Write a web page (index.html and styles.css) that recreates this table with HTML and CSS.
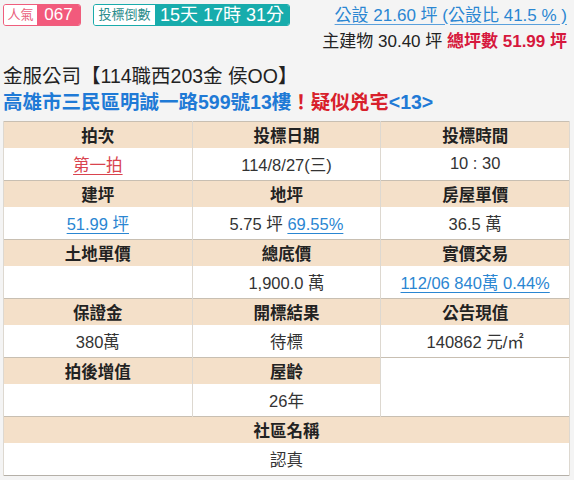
FILE: index.html
```html
<!DOCTYPE html>
<html lang="zh-Hant">
<head>
<meta charset="utf-8">
<link rel="stylesheet" href="styles.css">
</head>
<body>
<div class="top">
  <div class="badges">
    <span class="badge pink"><span class="lbl">人氣</span><span class="val">067</span></span>
    <span class="badge teal"><span class="lbl">投標倒數</span><span class="val">15天 17時 31分</span></span>
  </div>
  <div class="area">
    <a class="public" href="#">公設 21.60 坪 (公設比 41.5 % )</a>
    <div class="main">主建物 30.40 坪 <b class="total">總坪數 51.99 坪</b></div>
  </div>
</div>
<div class="title">金服公司【114職西203金 侯OO】</div>
<div class="addr">高雄市三民區明誠一路599號13樓<span class="warn">！疑似兇宅</span>&lt;13&gt;</div>
<table class="info">
  <tr class="h"><th>拍次</th><th>投標日期</th><th>投標時間</th></tr>
  <tr class="d"><td><a class="red" href="#">第一拍</a></td><td>114/8/27(三)</td><td>10 : 30</td></tr>
  <tr class="h"><th>建坪</th><th>地坪</th><th>房屋單價</th></tr>
  <tr class="d"><td><a class="blue" href="#">51.99 坪</a></td><td>5.75 坪 <a class="blue" href="#">69.55%</a></td><td>36.5 萬</td></tr>
  <tr class="h"><th>土地單價</th><th>總底價</th><th>實價交易</th></tr>
  <tr class="d"><td></td><td>1,900.0 萬</td><td><a class="blue" href="#">112/06 840萬 0.44%</a></td></tr>
  <tr class="h"><th>保證金</th><th>開標結果</th><th>公告現值</th></tr>
  <tr class="d"><td>380萬</td><td>待標</td><td>140862 元/㎡</td></tr>
  <tr class="h"><th>拍後增值</th><th>屋齡</th><td class="empty" rowspan="2"></td></tr>
  <tr class="d"><td></td><td>26年</td></tr>
  <tr class="h"><th colspan="3">社區名稱</th></tr>
  <tr class="d"><td colspan="3">認真</td></tr>
</table>
</body>
</html>
```
FILE: styles.css
```css
html, body {
  margin: 0;
  padding: 0;
  background: #f4f4f4;
}
body {
  font-family: "Liberation Sans", "Noto Sans CJK TC", sans-serif;
  color: #222;
  padding: 0 3px;
  width: 568px;
}
.top {
  display: flex;
  justify-content: space-between;
  align-items: flex-start;
  height: 63px;
}
.badges {
  display: flex;
  gap: 12px;
  padding-top: 4px;
}
.badge {
  display: inline-flex;
  height: 22px;
  border-radius: 3px;
  overflow: hidden;
  box-sizing: border-box;
  line-height: 20px;
  white-space: nowrap;
}
.badge .lbl,
.badge .val {
  box-sizing: border-box;
  text-align: center;
}
.badge .lbl {
  background: #fff;
  font-size: 13px;
}
.badge .val {
  color: #fff;
  font-size: 17px;
}
.pink { border: 1px solid #ef5d7c; }
.pink .lbl { color: #e9607c; width: 33px; }
.pink .val { background: #f25a7c; width: 43px; }
.teal { border: 1px solid #1aabab; }
.teal .lbl { color: #2b8c8c; width: 61px; }
.teal .val { background: #17acac; width: 134px; font-size: 18px; }
.area {
  text-align: right;
  padding-right: 4px;
  padding-top: 5px;
}
.public {
  color: #2a86d2;
  font-size: 17px;
  line-height: 22px;
  text-decoration: underline;
  text-decoration-color: #5aa0dc;
  text-underline-offset: 3px;
}
.main {
  font-size: 17px;
  line-height: 22px;
  margin-top: 4px;
  color: #222;
}
.total {
  color: #d6183d;
}
.title {
  font-size: 19.5px;
  line-height: 26px;
  color: #222;
}
.addr {
  font-size: 19.5px;
  line-height: 26px;
  font-weight: bold;
  color: #1f7ad6;
}
.warn {
  color: #d8202b;
}
.info {
  margin-top: 6px;
  width: 567px;
  border-collapse: collapse;
  border: 1px solid #b5b0a8;
  table-layout: fixed;
  font-size: 16.5px;
}
.info th, .info td {
  text-align: center;
  padding: 0;
  border-left: 1px solid #ddd8d0;
  border-right: 1px solid #ddd8d0;
}
.info tr.h {
  height: 26px;
  background: #f4e0c9;
  border-top: 1px solid #c8bfb2;
}
.info tr.h th {
  font-weight: bold;
  color: #222;
}
.info tr.d {
  height: 33px;
  background: #fff;
}
.info tr.d td {
  color: #333;
}
.info td.empty {
  background: #fff;
}
.info a {
  text-decoration: underline;
  text-underline-offset: 3px;
}
.red {
  color: #d9434e;
  text-decoration-color: #d9434e;
}
.blue {
  color: #2a86d2;
  text-decoration-color: #7cb7e8;
}
```
